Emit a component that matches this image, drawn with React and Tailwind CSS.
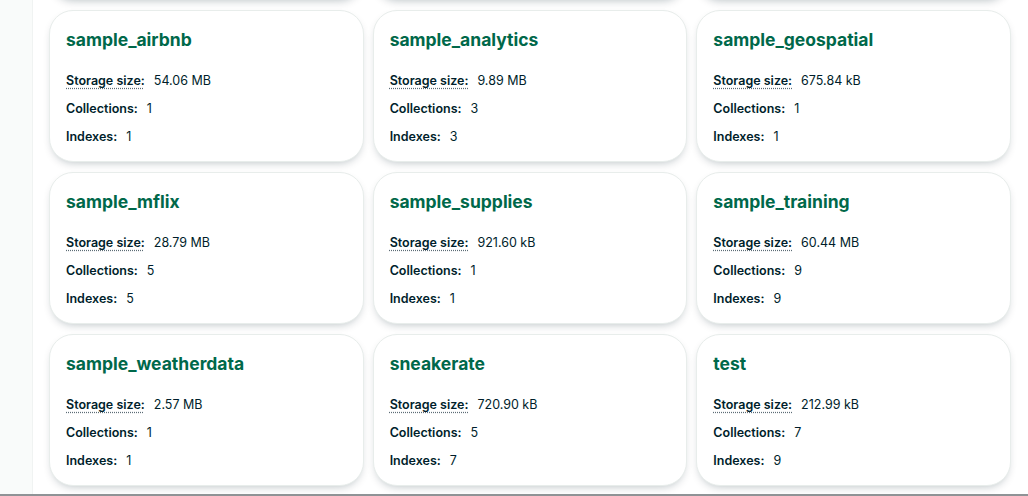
import React from "react";

const databases = [
    { name: "sample_airbnb", storage: "54.06 MB", collections: 1, indexes: 1 },
    { name: "sample_analytics", storage: "9.89 MB", collections: 3, indexes: 3 },
    { name: "sample_geospatial", storage: "675.84 kB", collections: 1, indexes: 1 },
    { name: "sample_mflix", storage: "28.79 MB", collections: 5, indexes: 5 },
    { name: "sample_supplies", storage: "921.60 kB", collections: 1, indexes: 1 },
    { name: "sample_training", storage: "60.44 MB", collections: 9, indexes: 9 },
    { name: "sample_weatherdata", storage: "2.57 MB", collections: 1, indexes: 1 },
    { name: "sneakerate", storage: "720.90 kB", collections: 5, indexes: 7 },
    { name: "test", storage: "212.99 kB", collections: 7, indexes: 9 },
];

const cardClass = "h-[152px] bg-white rounded-[24px] border border-[#e8edeb] shadow-[0_4px_10px_-4px_rgba(0,30,43,0.3)]";

const DatabaseCard = ({ db }) => {
    return (
        <div className={cardClass + " px-4 pt-[17px]"}>
            <h2 className="text-[17.5px] leading-6 font-bold text-[#00684a]">{db.name}</h2>
            <div className="mt-[19px] flex flex-col gap-2 text-[12.5px] leading-5 text-[#001e2b]">
                <div className="flex gap-[9px]">
                    <span className="font-semibold underline decoration-dotted decoration-[#5c6c75] underline-offset-[3px]">Storage size:</span>
                    <span>{db.storage}</span>
                </div>
                <div className="flex gap-[9px]">
                    <span className="font-semibold">Collections:</span>
                    <span>{db.collections}</span>
                </div>
                <div className="flex gap-[9px]">
                    <span className="font-semibold">Indexes:</span>
                    <span>{db.indexes}</span>
                </div>
            </div>
        </div>
    );
};

export default function App() {
    return (
        <div className="w-[1028px] h-[496px] flex flex-col bg-white overflow-hidden" style={{ fontFamily: "Inter, 'Noto Sans', sans-serif" }}>
            <div className="flex flex-1 overflow-hidden">
                <div className="w-[33px] shrink-0 bg-[#f9fbfa] border-r border-[#f0f3f2]" />
                <div className="flex-1 pl-[16px] pr-[16px] overflow-hidden">
                    <div className="-mt-[152px] grid grid-cols-3 gap-x-[9px] gap-y-[10px] w-[962px]">
                        <div className={cardClass} />
                        <div className={cardClass} />
                        <div className={cardClass} />
                        {databases.map((db) => (
                            <DatabaseCard key={db.name} db={db} />
                        ))}
                    </div>
                </div>
            </div>
            <div className="h-[2px] bg-[#8f9396]" />
        </div>
    );
}
